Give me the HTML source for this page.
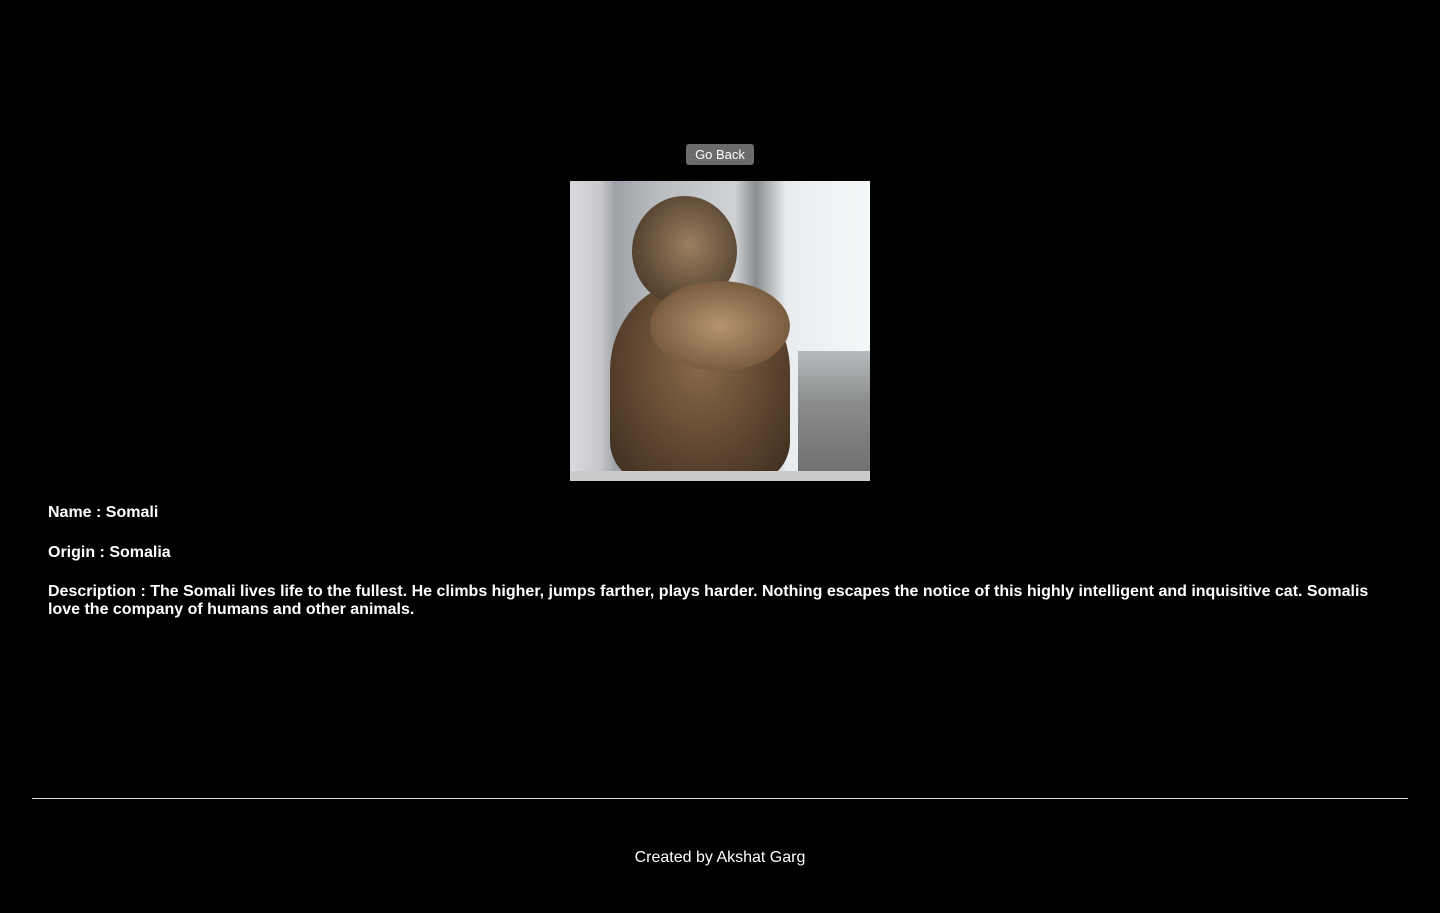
<!DOCTYPE html>
<html><head><style>
body{margin:0;background:#000;width:1440px;height:913px;overflow:hidden;font-family:"Liberation Sans",sans-serif;color:#fff;position:relative}
.btn{position:absolute;left:686px;top:144px;width:68px;height:21px;background:#6b6b6b;border-radius:3px;font-size:13px;line-height:21px;text-align:center;color:#fff}
.img{position:absolute;left:570px;top:181px;width:300px;height:300px;overflow:hidden;background:linear-gradient(90deg,#d9dadd 0%,#c8c9cc 10%,#9fa3a8 15%,#b9bcc0 30%,#cfd2d5 55%,#8a8d90 62%,#e8ecee 72%,#f5f8f9 100%)}
.t{position:absolute;left:48px;font-weight:bold;font-size:16px;line-height:18px;width:1350px}
hr{position:absolute;left:32px;width:1376px;margin:0;border:0;border-top:1px solid #ddd}
.f{position:absolute;top:849px;width:1440px;text-align:center;font-size:16px}
</style></head><body>
<div class="btn">Go Back</div>
<div class="img">
<div style="position:absolute;left:228px;top:170px;width:72px;height:130px;background:linear-gradient(180deg,#b8bbbd,#8a8c8d 40%,#6b6d6e)"></div>
<div style="position:absolute;left:40px;top:100px;width:180px;height:200px;border-radius:45% 45% 20% 20%;background:radial-gradient(ellipse at 50% 40%,#8a6a48,#5e4630 55%,#3b2c1e)"></div>
<div style="position:absolute;left:62px;top:15px;width:105px;height:110px;border-radius:50%;background:radial-gradient(ellipse at 55% 45%,#9a8060,#5e4a36 60%,#3a2c20)"></div>
<div style="position:absolute;left:80px;top:100px;width:140px;height:90px;border-radius:50%;background:radial-gradient(ellipse,#b69470,#7a5d40 70%,transparent 72%)"></div>
<div style="position:absolute;left:0;top:290px;width:300px;height:10px;background:#c9cbcc"></div>
</div>
<div class="t" style="top:504px">Name : Somali</div>
<div class="t" style="top:544px">Origin : Somalia</div>
<div class="t" style="top:583px">Description : The Somali lives life to the fullest. He climbs higher, jumps farther, plays harder. Nothing escapes the notice of this highly intelligent and inquisitive cat. Somalis love the company of humans and other animals.</div>
<hr style="top:798px">
<div class="f">Created by Akshat Garg</div>
</body></html>
